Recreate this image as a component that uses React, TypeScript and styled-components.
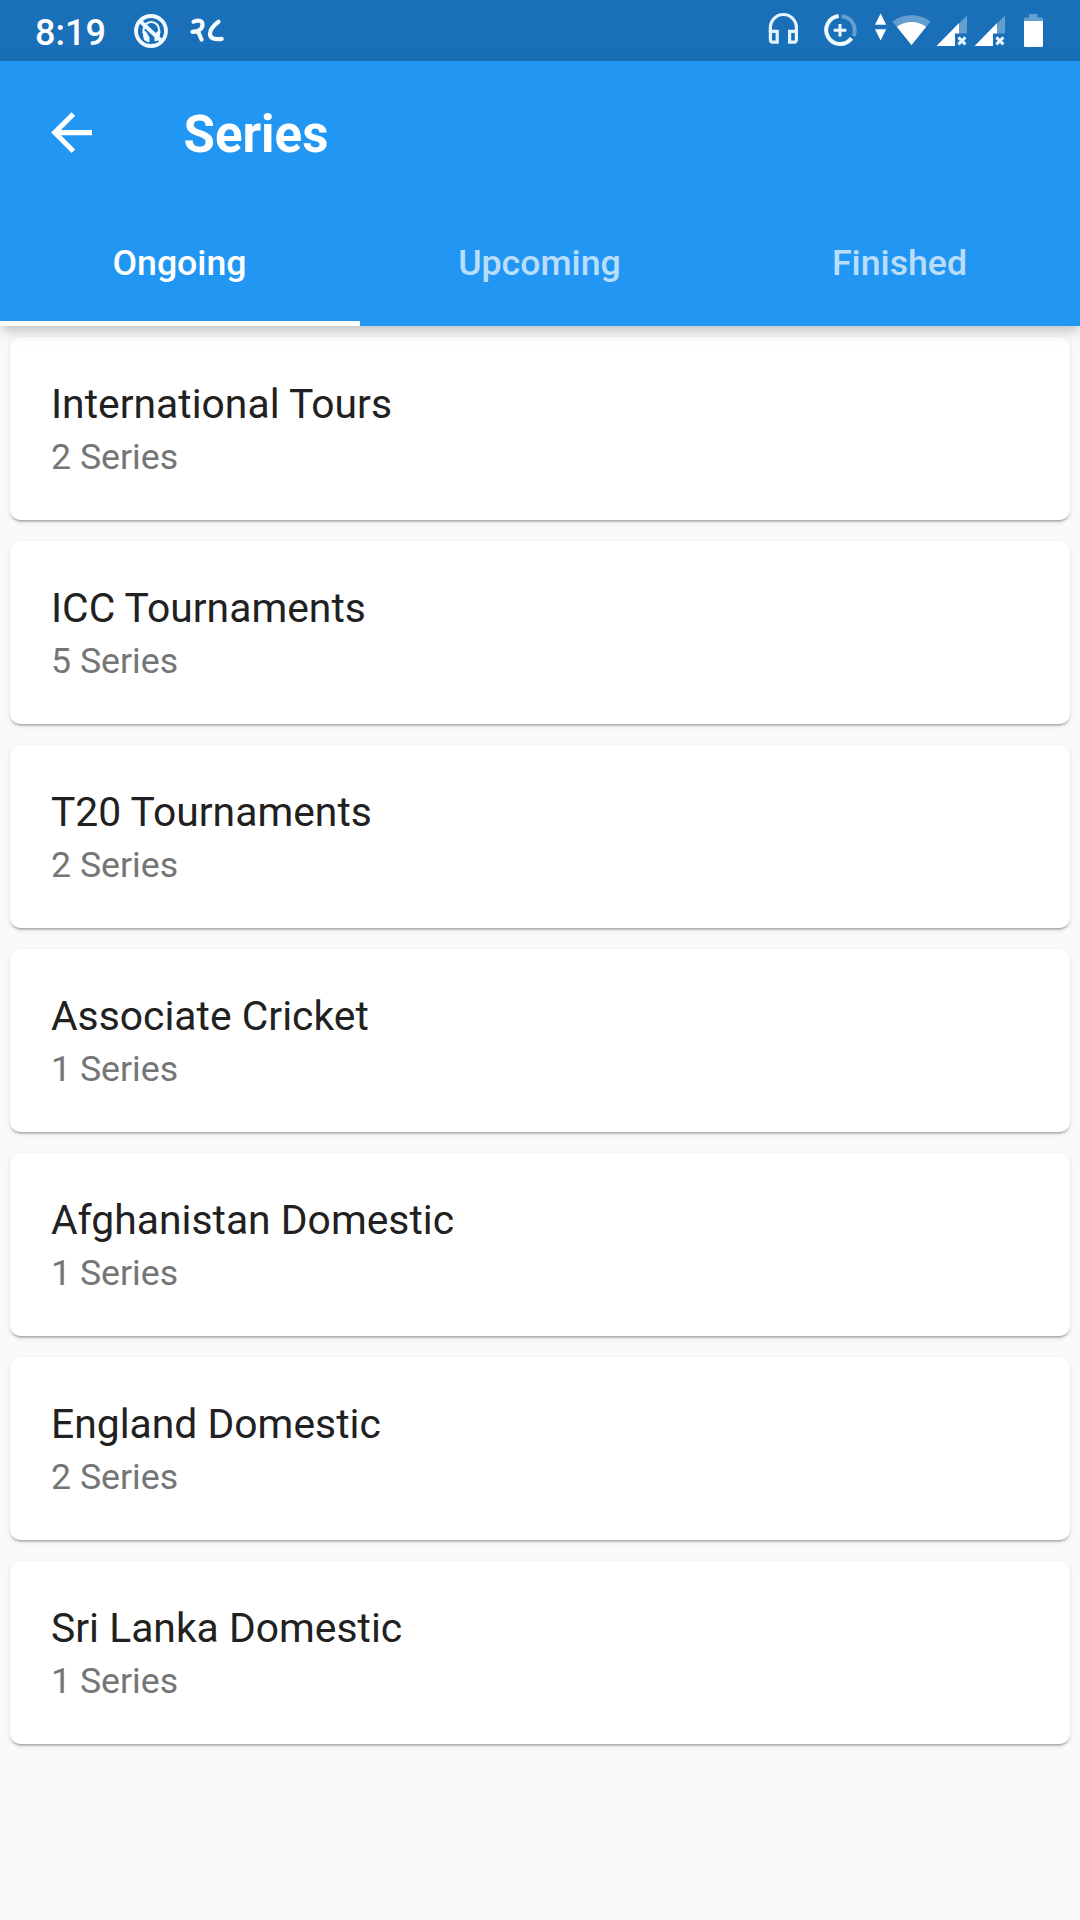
import React, { useState } from "react";
import styled, { createGlobalStyle } from "styled-components";

const GlobalStyle = createGlobalStyle`
  html, body { margin: 0; padding: 0; background: #fafafa; }
  body { font-family: Roboto, "Noto Sans", sans-serif; }
  * { box-sizing: border-box; }
`;

const Screen = styled.div`
  display: flex;
  flex-direction: column;
  width: 1080px;
  height: 1920px;
  overflow: hidden;
  background: #fafafa;
`;

const StatusBar = styled.div`
  display: flex;
  justify-content: space-between;
  height: 61px;
  padding: 0 36px 0 35px;
  background: #1a70b8;
  color: #fff;
`;

const StatusGroup = styled.div`
  display: flex;
  height: 61px;
`;

const Clock = styled.span`
  width: 97px;
  font-size: 36px;
  font-weight: 500;
  line-height: 66px;
`;

const StatusIcon = styled.svg<{ $gap?: number }>`
  display: block;
  flex: none;
  height: 61px;
  margin-left: ${(p) => p.$gap ?? 0}px;
`;

const Header = styled.header`
  position: relative;
  z-index: 1;
  display: flex;
  flex-direction: column;
  height: 265px;
  color: #fff;
  background: #2196f3;
  box-shadow:
    0 5px 10px -2.5px rgba(0, 0, 0, 0.17),
    0 10px 13px 0 rgba(0, 0, 0, 0.05),
    0 2.5px 20px 0 rgba(0, 0, 0, 0.05);
`;

const AppBar = styled.div`
  display: flex;
  align-items: center;
  height: 143px;
`;

const BackButton = styled.button`
  display: flex;
  align-items: center;
  justify-content: center;
  width: 143px;
  height: 143px;
  padding: 0;
  border: 0;
  background: none;
  color: inherit;
`;

const Title = styled.h1`
  margin: 0 0 0 40.5px;
  font-size: 51px;
  font-weight: 700;
  line-height: 60px;
  padding-top: 5px;
`;

const Tabs = styled.nav`
  display: grid;
  grid-template-columns: repeat(3, 1fr);
  height: 122px;
`;

const Tab = styled.button<{ $active: boolean }>`
  padding: 0 1px 0 0;
  border: 0;
  border-bottom: 5px solid ${(p) => (p.$active ? "#fff" : "transparent")};
  background: none;
  color: ${(p) => (p.$active ? "#fff" : "rgba(255, 255, 255, 0.7)")};
  font-family: inherit;
  font-size: 35.7px;
  font-weight: 500;
  line-height: 42px;
`;

const List = styled.main`
  display: flex;
  flex-direction: column;
  gap: 20.4px;
  padding: 10.6px 10.2px;
`;

const Card = styled.section`
  flex: none;
  height: 183.6px;
  padding: 42px 40.8px 0;
  border-radius: 10.2px;
  background: #fff;
  box-shadow:
    0 2.5px 2.5px -2px rgba(0, 0, 0, 0.2),
    0 1.5px 2px 0 rgba(0, 0, 0, 0.14),
    0 2px 6px 0 rgba(0, 0, 0, 0.07);
`;

const CardTitle = styled.h2`
  margin: 0;
  color: #212121;
  font-size: 40.8px;
  font-weight: 400;
  line-height: 50px;
  letter-spacing: 0.02px;
`;

const CardMeta = styled.p`
  margin: 6px 0 0;
  color: #757575;
  font-size: 35.7px;
  line-height: 44px;
`;

const DIM = "rgba(255,255,255,0.32)";

const BlockedIcon = () => (
  <StatusIcon width="38" viewBox="132 0 38 61" fill="none" stroke="#f1f9ff">
    <circle cx="151" cy="31" r="15" strokeWidth="3.8" />
    <path d="M143.500 33v-3c0-4.500 3.500-8 7.800-8s7.800 3.500 7.800 8v3" strokeWidth="2.200" />
    <path d="M143 32l2.500-.5 3.500 6v4.500l-4.500-2zM160 31.500l-3 .5-2 5v4l3.500-1.500z" fill="#f1f9ff" strokeWidth="1" />
    <path d="M139.500 20.500l23 21.500" strokeWidth="3.800" />
  </StatusIcon>
);

const BrandIcon = () => (
  <StatusIcon
    $gap={18}
    width="38"
    viewBox="188 0 38 61"
    fill="none"
    stroke="#f4fbff"
    strokeWidth="4.2"
    strokeLinecap="round"
    strokeLinejoin="round"
  >
    <path d="M193.500 21.800c4-2.300 9-1.300 9 2.700 0 4.500-4.500 7.500-10 7.300 3.500-.8 5.500-.3 6.500 1.700l2.500 6" />
    <path d="M218.500 21.800c-5 3.700-8.500 8.200-8.500 12.200 0 4.700 5 5.700 11.700 4.800" />
  </StatusIcon>
);

const HeadphonesIcon = () => (
  <StatusIcon width="32" viewBox="768 0 32 61" fill="none" stroke="#e5f5ff" strokeWidth="3.2">
    <path d="M770.400 32V27.500a13 13 0 0 1 26 0V32" />
    <path d="M770.400 31.400h6.800v10.800h-4.400a2.400 2.400 0 0 1-2.400-2.400zM796.400 31.400h-6.800v10.800h4.400a2.400 2.400 0 0 0 2.400-2.400z" />
  </StatusIcon>
);

const DataSaverIcon = () => (
  <StatusIcon $gap={22} width="36" viewBox="822 0 36 61" fill="none" strokeWidth="4">
    <path d="M841.500 16.300a14 14 0 0 1 12 19.700" stroke={DIM} />
    <path d="M838.700 16.100a14 14 0 1 0 12.800 22.200" stroke="#effaff" />
    <path d="M840 24v12.600M833.700 30.300h12.600" stroke="#effaff" strokeWidth="3" />
  </StatusIcon>
);

const WifiIcon = () => (
  <StatusIcon $gap={16} width="58" viewBox="874 0 58 61" fill="#fff">
    <path d="M880.600 13.600l5.600 11.200h-11.200zM875 29.200h11.200l-5.600 11.200z" />
    <path d="M892.500 21.500C903 13 920 13 930.500 21.500L911.500 45z" fill={DIM} />
    <path d="M896.800 26.800C905.500 20.300 917.500 20.300 926.200 26.800L911.500 45z" />
  </StatusIcon>
);

const SignalIcon = ({ gap }: { gap: number }) => (
  <StatusIcon $gap={gap} width="32" viewBox="936 0 32 61" fill="#fff">
    <path d="M959 23.500l8-8V33.500h-8z" fill={DIM} />
    <path d="M936.500 46L959 23v10.500h-4V46z" />
    <path d="M958.400 37.400l7 7M965.400 37.400l-7 7" stroke="#e8f6ff" strokeWidth="3" />
  </StatusIcon>
);

const BatteryIcon = () => (
  <StatusIcon $gap={17} width="21" viewBox="1023 0 21 61" fill="#fff">
    <path d="M1029 14h8.500v3.600h4q1.500 0 1.500 1.500V21h-19v-1.900q0-1.500 1.500-1.500h3.500z" fill={DIM} />
    <path d="M1024 21h19v24.500q0 1.500-1.500 1.500h-16q-1.500 0-1.500-1.500z" />
  </StatusIcon>
);

const BackIcon = () => (
  <svg width="61.2" height="61.2" viewBox="0 0 24 24" fill="currentColor">
    <path d="M20 11H7.830l5.590-5.590L12 4l-8 8 8 8 1.410-1.410L7.830 13H20v-2z" />
  </svg>
);

const TAB_NAMES = ["Ongoing", "Upcoming", "Finished"];

const CATEGORIES = [
  { name: "International Tours", count: 2 },
  { name: "ICC Tournaments", count: 5 },
  { name: "T20 Tournaments", count: 2 },
  { name: "Associate Cricket", count: 1 },
  { name: "Afghanistan Domestic", count: 1 },
  { name: "England Domestic", count: 2 },
  { name: "Sri Lanka Domestic", count: 1 },
];

export default function App() {
  const [active, setActive] = useState(TAB_NAMES[0]);
  return (
    <Screen>
      <GlobalStyle />
      <StatusBar>
        <StatusGroup>
          <Clock>8:19</Clock>
          <BlockedIcon />
          <BrandIcon />
        </StatusGroup>
        <StatusGroup>
          <HeadphonesIcon />
          <DataSaverIcon />
          <WifiIcon />
          <SignalIcon gap={4} />
          <SignalIcon gap={6} />
          <BatteryIcon />
        </StatusGroup>
      </StatusBar>
      <Header>
        <AppBar>
          <BackButton aria-label="Back">
            <BackIcon />
          </BackButton>
          <Title>Series</Title>
        </AppBar>
        <Tabs>
          {TAB_NAMES.map((name) => (
            <Tab key={name} $active={name === active} onClick={() => setActive(name)}>
              {name}
            </Tab>
          ))}
        </Tabs>
      </Header>
      <List>
        {CATEGORIES.map(({ name, count }) => (
          <Card key={name}>
            <CardTitle>{name}</CardTitle>
            <CardMeta>{count} Series</CardMeta>
          </Card>
        ))}
      </List>
    </Screen>
  );
}
